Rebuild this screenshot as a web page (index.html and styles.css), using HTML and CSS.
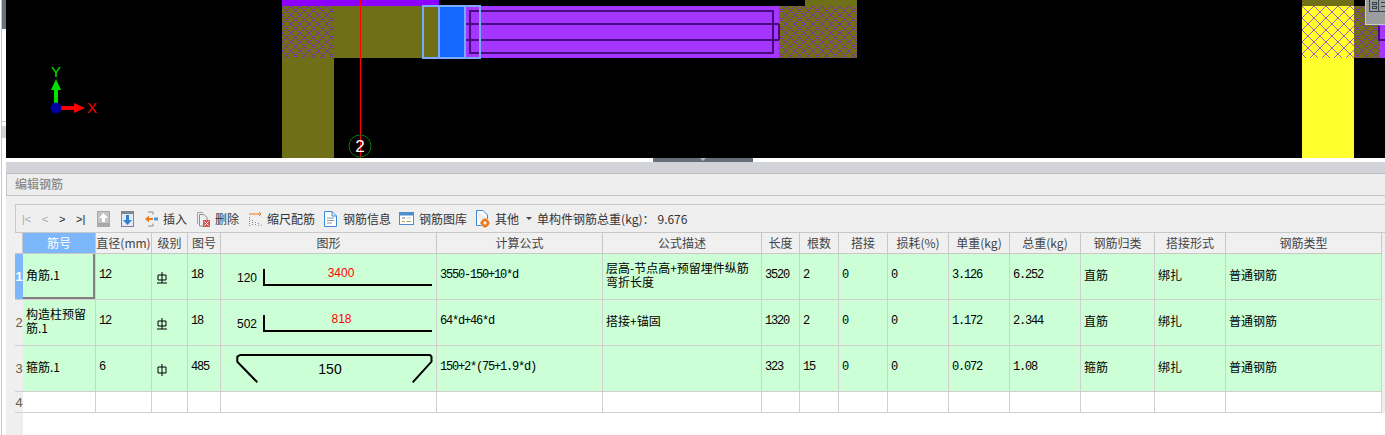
FILE: index.html
```html
<!DOCTYPE html>
<html lang="zh-CN">
<head>
<meta charset="utf-8">
<title>编辑钢筋</title>
<link rel="stylesheet" href="styles.css">
</head>
<body>
<div class="app">
  <div class="rail">
    <div class="rail-thumb"></div>
    <div class="rail-gap"></div>
    <div class="rail-notch"></div>
    <div class="rail-band"></div>
  </div>
  <div class="main">
    <svg class="viewport" width="1379" height="158" viewBox="6 0 1379 158">
      <defs>
        <pattern id="hatchOlive" width="9" height="9" patternUnits="userSpaceOnUse" x="282" y="6">
          <rect width="9" height="9" fill="#6f6f17"/>
          <path d="M0 0L9 9M9 0L0 9" stroke="#8a10f0" stroke-width=".7" shape-rendering="crispEdges"/>
        </pattern>
        <pattern id="hatchYellow" width="12" height="12" patternUnits="userSpaceOnUse" x="1302" y="6">
          <rect width="12" height="12" fill="#ffff2e"/>
          <path d="M0 0L12 12M12 0L0 12" stroke="#8a10f0" stroke-width=".7" shape-rendering="crispEdges"/>
        </pattern>
      </defs>
      <rect x="6" y="0" width="1379" height="158" fill="#000"/>
      <rect x="282" y="0" width="157" height="6" fill="#8c00ff"/>
      <rect x="805" y="0" width="52" height="6" fill="#6f6f17"/>
      <rect x="282" y="6" width="52" height="52" fill="url(#hatchOlive)"/>
      <rect x="334" y="6" width="105" height="52" fill="#6f6f17"/>
      <rect x="282" y="58" width="52" height="100" fill="#6f6f17"/>
      <rect x="439" y="6" width="26" height="52" fill="#1468ff"/>
      <rect x="465" y="6" width="314" height="52" fill="#a536ff"/>
      <rect x="779" y="6" width="78" height="52" fill="url(#hatchOlive)"/>
      <g fill="none" stroke="#470a80" stroke-width="2" shape-rendering="crispEdges">
        <rect x="470" y="11" width="303" height="42"/>
        <path d="M466 24H779M466 40H779M779 24V40"/>
      </g>
      <g fill="none" stroke="#78a8ff" stroke-width="2" shape-rendering="crispEdges">
        <rect x="423" y="6" width="57" height="52"/>
        <path d="M439 6V58M465 6V58"/>
      </g>
      <rect x="360" y="0" width="1" height="158" fill="#ff0000"/>
      <circle cx="360" cy="146" r="11" fill="none" stroke="#0a7a0a" stroke-width="1"/>
      <text class="axis-num" x="360" y="152">2</text>
      <path d="M51 90L56 79L61 90H58V104H54V90Z" fill="#00e000"/>
      <text class="axis-y" x="56" y="77">Y</text>
      <path d="M60 106H74V103L85 108L74 113V110H60Z" fill="#ff0000"/>
      <circle cx="56" cy="108" r="5.500" fill="#0000a0"/>
      <text class="axis-x" x="92" y="113">X</text>
      <rect x="1302" y="0" width="52" height="6" fill="#6f6f17"/>
      <rect x="1302" y="6" width="52" height="52" fill="url(#hatchYellow)"/>
      <rect x="1302" y="58" width="52" height="100" fill="#ffff2e"/>
      <rect x="1354" y="6" width="26" height="52" fill="url(#hatchOlive)"/>
      <rect x="1380" y="24" width="5" height="34" fill="#a536ff"/>
      <path d="M1379 26V40H1385" fill="none" stroke="#470a80" stroke-width="2" shape-rendering="crispEdges"/>
      <rect x="1365" y="0" width="20" height="25" fill="#c9cbcd"/>
      <rect x="1366" y="0" width="19" height="24" fill="#9b9d9f"/>
      <g fill="none" stroke="#33424d" stroke-width="1" shape-rendering="crispEdges">
        <path d="M1369 0V11H1385"/>
        <path d="M1372 2H1376V4H1372ZM1372 6H1376V8H1372ZM1381 2H1385M1381 6H1385M1378 0V11"/>
      </g>
    </svg>
    <div class="splitter"><div class="handle"><span class="handle-arrow"></span></div></div>
    <div class="band"></div>
    <div class="title">编辑钢筋</div>
    <div class="editor">
      <div class="toolbar">
        <div class="nav">
          <span class="nav-btn nav-off w20">|&lt;</span>
          <span class="nav-btn nav-off w17">&lt;</span>
          <span class="nav-btn w17">&gt;</span>
          <span class="nav-btn w21">&gt;|</span>
        </div>
        <svg class="move" width="13" height="16" viewBox="0 0 13 16"><rect width="13" height="16" fill="#a9a9a9"/><rect x="1" y="1" width="11" height="11" fill="#c4c4c4"/><path d="M6.500 2L11 7H8V11H5V7H2Z" fill="#fff"/></svg>
        <svg class="move" width="13" height="16" viewBox="0 0 13 16"><rect width="13" height="16" fill="#7d8790"/><rect x="1" y="3" width="11" height="12" fill="#e3eaf2"/><path d="M6.500 14L2 9H5V4H8V9H11Z" fill="#2f7fd6"/></svg>
        <div class="tools">
          <div class="tool">
            <svg width="13" height="16" viewBox="0 0 13 16"><path d="M3 1H8V3.500M3 15H8V12.500" fill="none" stroke="#8a8f94"/><path d="M0 8L4 4.500V7H8V9H4V11.500Z" fill="#ee7a1c"/><rect x="9" y="6.500" width="4" height="3" fill="#4d9be0"/></svg>
            <span>插入</span>
          </div>
          <div class="tool">
            <svg width="15" height="16" viewBox="0 0 15 16"><path d="M2.500 13V1.500H8" fill="none" stroke="#a0a4a8"/><path d="M4.500 15V3.500H9L12 6.500V9M4.500 15H8" fill="none" stroke="#8a8f94"/><rect x="8" y="9" width="7" height="7" fill="#d9534f"/><path d="M9.500 10.500L13.500 14.500M13.500 10.500L9.500 14.500" stroke="#fff"/></svg>
            <span>删除</span>
          </div>
          <div class="tool">
            <svg width="15" height="16" viewBox="0 0 15 16"><path d="M2 3H14M12 1L14 3L12 5" fill="none" stroke="#ee7a1c"/><path d="M2.500 6V15M5.500 9V15M8.500 11V15M11.500 12V15M14 13.500V15" fill="none" stroke="#7f8c97" stroke-dasharray="1 1"/></svg>
            <span>缩尺配筋</span>
          </div>
          <div class="tool">
            <svg width="15" height="16" viewBox="0 0 15 16"><path d="M1.500 .5H9L13.500 5V15.500H1.500Z" fill="#fff" stroke="#3d8ad6"/><path d="M9 .5V5H13.500" fill="none" stroke="#3d8ad6"/><path d="M4 7H11M4 9.500H11M4 12H9" stroke="#8a9aa8"/></svg>
            <span>钢筋信息</span>
          </div>
          <div class="tool">
            <svg width="15" height="16" viewBox="0 0 15 16"><rect x=".5" y="1.500" width="14" height="12" fill="#fff" stroke="#4a8fd0"/><rect x="1" y="2" width="13" height="2.500" fill="#4a8fd0"/><path d="M3 7H6" stroke="#777"/><path d="M3 10.500H6" stroke="#d9a13a"/><path d="M7.500 10.500H12" stroke="#6fb35a"/><path d="M7.500 7H12" stroke="#c9c9c9"/></svg>
            <span>钢筋图库</span>
          </div>
          <div class="tool">
            <svg width="15" height="18" viewBox="0 0 15 18"><path d="M1.500 .5H8L12.500 5V9M1.500 .5V15.500H6" fill="#fff" stroke="#3d8ad6"/><circle cx="10" cy="13" r="3" fill="none" stroke="#ee7a1c" stroke-width="2.500"/><path d="M10 8.500V10M10 16V17.500M5.500 13H7M13 13H14.500" stroke="#ee7a1c" stroke-width="2"/></svg>
            <span>其他</span>
          </div>
          <span class="caret"></span>
          <span class="total">单构件钢筋总重(kg)：<span class="total-val">9.676</span></span>
        </div>
      </div>
      <table class="grid">
        <colgroup>
          <col class="c0"><col class="c1"><col class="c2"><col class="c3"><col class="c4"><col class="c5"><col class="c6"><col class="c7"><col class="c8"><col class="c9"><col class="c10"><col class="c11"><col class="c12"><col class="c13"><col class="c14"><col class="c15"><col class="c16">
        </colgroup>
        <thead>
          <tr>
            <th></th><th class="active">筋号</th><th>直径(mm)</th><th>级别</th><th>图号</th><th>图形</th><th>计算公式</th><th>公式描述</th><th>长度</th><th>根数</th><th>搭接</th><th>损耗(%)</th><th>单重(kg)</th><th>总重(kg)</th><th>钢筋归类</th><th>搭接形式</th><th>钢筋类型</th>
          </tr>
        </thead>
        <tbody>
          <tr class="row">
            <th class="idx idx-on">1</th>
            <td class="t sel">角筋.1</td>
            <td class="n">12</td>
            <td class="grade"><svg width="10" height="12" viewBox="0 0 10 12"><path d="M1 3H9V8H1ZM5 0V11M0 11H10" fill="none" stroke="#000"/></svg></td>
            <td class="n">18</td>
            <td class="shape"><svg width="215" height="45" viewBox="0 0 215 45"><text class="dim" x="16" y="28">120</text><text class="dim red" x="120" y="23" text-anchor="middle">3400</text><path d="M43 15V31H211" class="bar"/></svg></td>
            <td class="n">3550-150+10*d</td>
            <td class="t">层高-节点高+预留埋件纵筋<br>弯折长度</td>
            <td class="n">3520</td><td class="n">2</td><td class="n">0</td><td class="n">0</td>
            <td class="n">3.126</td><td class="n">6.252</td>
            <td class="t">直筋</td><td class="t">绑扎</td><td class="t">普通钢筋</td>
          </tr>
          <tr class="row">
            <th class="idx">2</th>
            <td class="t">构造柱预留筋.1</td>
            <td class="n">12</td>
            <td class="grade"><svg width="10" height="12" viewBox="0 0 10 12"><path d="M1 3H9V8H1ZM5 0V11M0 11H10" fill="none" stroke="#000"/></svg></td>
            <td class="n">18</td>
            <td class="shape"><svg width="215" height="45" viewBox="0 0 215 45"><text class="dim" x="16" y="28">502</text><text class="dim red" x="120.500" y="23" text-anchor="middle">818</text><path d="M43 15V31H211" class="bar"/></svg></td>
            <td class="n">64*d+46*d</td>
            <td class="t">搭接+锚固</td>
            <td class="n">1320</td><td class="n">2</td><td class="n">0</td><td class="n">0</td>
            <td class="n">1.172</td><td class="n">2.344</td>
            <td class="t">直筋</td><td class="t">绑扎</td><td class="t">普通钢筋</td>
          </tr>
          <tr class="row">
            <th class="idx">3</th>
            <td class="t">箍筋.1</td>
            <td class="n">6</td>
            <td class="grade"><svg width="10" height="12" viewBox="0 0 10 12"><path d="M1 3H9V9H1ZM5 0V12" fill="none" stroke="#000"/></svg></td>
            <td class="n">485</td>
            <td class="shape"><svg width="215" height="45" viewBox="0 0 215 45"><path d="M36.300 36.300L16.300 15.700V10.700L19 9H209L210.500 10.700V15.700L191.700 36.300" class="bar round"/><text class="dim big" x="109" y="28" text-anchor="middle">150</text></svg></td>
            <td class="n">150+2*(75+1.9*d)</td>
            <td class="t"></td>
            <td class="n">323</td><td class="n">15</td><td class="n">0</td><td class="n">0</td>
            <td class="n">0.072</td><td class="n">1.08</td>
            <td class="t">箍筋</td><td class="t">绑扎</td><td class="t">普通钢筋</td>
          </tr>
          <tr class="row-empty">
            <th class="idx">4</th>
            <td></td><td></td><td></td><td></td><td></td><td></td><td></td><td></td><td></td><td></td><td></td><td></td><td></td><td></td><td></td><td></td>
          </tr>
        </tbody>
      </table>
      <div class="filler"></div>
    </div>
  </div>
</div>
</body>
</html>
```
FILE: styles.css
```css
* { box-sizing: border-box; }
html, body { margin: 0; padding: 0; height: 435px; overflow: hidden; background: #fff; }
body { font-family: "Noto Sans CJK SC", "Liberation Sans", sans-serif; font-size: 12px; color: #333; }

.app { display: flex; height: 435px; width: 1385px; }

.rail { width: 6px; flex: none; padding-left: 1px; display: flex; flex-direction: column; }
.rail-thumb, .rail-gap, .rail-notch, .rail-band { border-left: 1px solid #c8c8c8; }
.rail-thumb { height: 29px; background: #69737c; }
.rail-gap { height: 93px; border-bottom: 1px solid #c8c8c8; }
.rail-notch { height: 4px; }
.rail-band { height: 12px; background: #d2d3d8; }
.rail::after { content: ""; flex: 1; border-left: 1px solid #c8c8c8; }

.main { width: 1379px; flex: none; display: flex; flex-direction: column; height: 435px; }
.viewport { display: block; flex: none; }
.axis-num { font: 17px "Liberation Sans", sans-serif; fill: #fff; text-anchor: middle; }
.axis-y { font: 15px "Liberation Sans", sans-serif; fill: #00e000; text-anchor: middle; }
.axis-x { font: 15px "Liberation Sans", sans-serif; fill: #ff0000; text-anchor: middle; }

.splitter { height: 4px; flex: none; background: #fff; }
.handle { width: 100px; height: 4px; margin-left: 647px; background: #677079; display: flex; justify-content: center; }
.handle-arrow { width: 0; height: 0; border-left: 3px solid transparent; border-right: 3px solid transparent; border-top: 3px solid #b4b8bc; }

.band { height: 12px; flex: none; background: #d2d3d8; border-bottom: 1px solid #bdbdbd; }
.title { height: 22px; flex: none; background: #eeeeee; border-left: 1px solid #c8c8c8; border-bottom: 1px solid #c4c4c4; padding-left: 8px; line-height: 20px; color: #8a8a8a; font-weight: 500; }

.editor { flex: 1; min-height: 0; background: #efefef; padding: 8px 0 0 9px; display: flex; flex-direction: column; }

.toolbar { height: 29px; flex: none; display: flex; align-items: center; border-top: 1px solid #c8c8c8; border-left: 1px solid #c8c8c8; border-bottom: 1px solid #c8c8c8; padding-left: 6px; background: #efefef; }
.nav { display: flex; font: 11px "Liberation Sans", sans-serif; color: #222; }
.nav-btn { display: block; }
.nav-off { color: #aaa; }
.w20 { width: 20px; }
.w17 { width: 17px; }
.w21 { width: 21px; }
.move { margin-right: 11px; flex: none; }
.tools { display: flex; align-items: center; gap: 8px; }
.tool { display: flex; align-items: center; gap: 5px; color: #333; white-space: nowrap; }
.tool svg { flex: none; display: block; }
.caret { width: 0; height: 0; margin-left: -1px; margin-right: -3px; border-left: 3px solid transparent; border-right: 3px solid transparent; border-top: 3px solid #444; }
.total { margin-left: 0; color: #333; white-space: nowrap; }
.total-val { margin-left: 3px; }

.grid { table-layout: fixed; width: 1367px; border-collapse: separate; border-spacing: 0; flex: none; font-size: 12px; }
.c0 { width: 8px; }
.c1 { width: 73px; }
.c2 { width: 56px; }
.c3 { width: 36px; }
.c4 { width: 33px; }
.c5 { width: 216px; }
.c6 { width: 166px; }
.c7 { width: 159px; }
.c8 { width: 38px; }
.c9 { width: 39px; }
.c10 { width: 49px; }
.c11 { width: 61px; }
.c12 { width: 61px; }
.c13 { width: 71px; }
.c14 { width: 74px; }
.c15 { width: 71px; }
.c16 { width: 156px; }

.grid th, .grid td { border-right: 1px solid #d0d0d0; border-bottom: 1px solid #d0d0d0; padding: 0; overflow: hidden; }
.grid thead tr { height: 21px; }
.grid thead th { background: #f0f0f0; color: #444; font-weight: 400; white-space: nowrap; border-color: #c8c8c8; line-height: 16px; }
.grid thead th.active { background: #7cb6fb; color: #fff; }

.row { height: 46px; }
.row-empty { height: 21px; }
.row td { background: #ccffd6; color: #000; padding: 0 2px 3px 3px; line-height: 14px; }
.row-empty td { background: #fff; }

.grid .idx { background: #efefef; color: #6a5d48; font: 400 13px "Liberation Sans", sans-serif; text-align: center; border-right: 0; }
.grid .idx-on { background: #7cb6fb; color: #fff; font-weight: 700; }

.row .n { font-family: "Liberation Mono", monospace; font-size: 12px; letter-spacing: -1.2px; padding-left: 3px; }
.row .t { font-family: "Noto Sans CJK SC", sans-serif; font-size: 12px; }
.row .sel { box-shadow: inset -2px -2px 0 #808080; }
.row .grade { padding: 2px 0 0 5px; }
.grade svg { display: block; }
.row .shape { padding: 0; vertical-align: top; }
.shape svg { display: block; }

.dim { font: 12px "Liberation Sans", sans-serif; fill: #000; }
.red { fill: #ff0000; }
.big { font-size: 14px; }
.bar { fill: none; stroke: #000; stroke-width: 2; }
.round { stroke-linejoin: round; }

.filler { flex: 1; background: linear-gradient(to right, #efefef 8px, #fff 8px); }
```
